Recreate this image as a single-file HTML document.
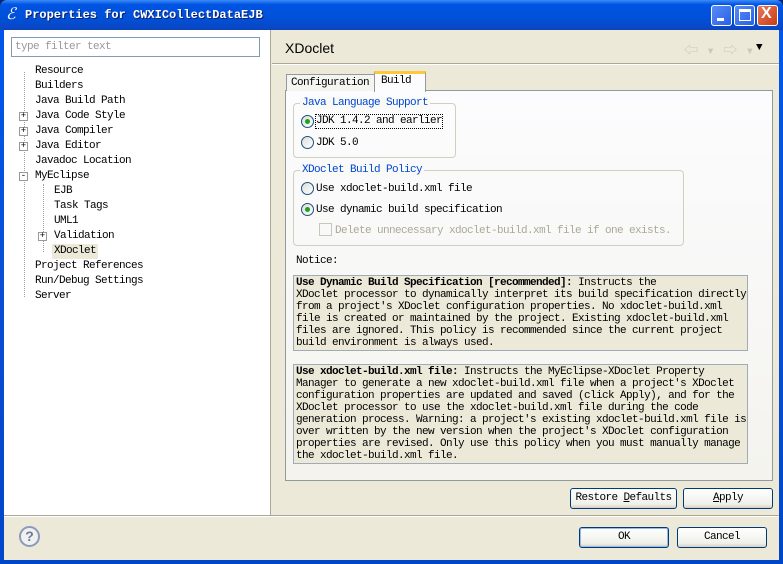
<!DOCTYPE html>
<html><head><style>
*{margin:0;padding:0;box-sizing:border-box}
body{width:783px;height:564px;overflow:hidden;background:#0a246a;font-family:"Liberation Mono","Noto Sans CJK SC",monospace;font-size:11px;letter-spacing:-0.6px;color:#000;position:relative}
.abs{position:absolute}
.win{left:0;top:0;width:783px;height:564px;background:linear-gradient(#0058ee,#0a4fd6 50%,#0046c8);border-radius:7px 7px 0 0}
.title{left:0;top:0;width:783px;height:30px;background:linear-gradient(#3c8cf8,#0054e3 15%,#0050d8 60%,#0848c8 90%,#0a44b8);border-radius:7px 7px 0 0}
.tt{left:25px;top:8px;color:#fff;font-weight:bold;font-size:12px;letter-spacing:0;text-shadow:1px 1px #0a1f6a}
.tb{top:5px;width:21px;height:21px;border:1px solid #fff;border-radius:3px;background:linear-gradient(135deg,#5a8cf6,#2660e6)}
.client{left:4px;top:30px;width:775px;height:530px;background:#ece9d8}
.left{left:4px;top:30px;width:267px;height:485px;background:#fff;border-right:1px solid #aca899}
.filter{left:11px;top:37px;width:249px;height:20px;border:1px solid #7f9db9;color:#999;padding:3px 3px;font-size:11px}
.ti{position:absolute;white-space:nowrap;line-height:13px}
.hd{left:285px;top:40px;font-family:"Liberation Sans",sans-serif;font-size:14px;letter-spacing:0}
.box{border:1px solid #919b9c;background:#fcfcfe}
.grp{border:1px solid #d0d0bf;border-radius:4px}
.gl{position:absolute;background:#f9f9f6;color:#0046d5;padding:0 2px;top:-7px;left:6px}
.rad{position:absolute;width:13px;height:13px;border:1px solid #1c5180;border-radius:50%;background:linear-gradient(135deg,#dcdcd7,#fff)}
.rad.on::after{content:"";position:absolute;left:3px;top:3px;width:5px;height:5px;border-radius:50%;background:#21a121}
.nt{position:absolute;left:293px;width:455px;border:1px solid #a0aab8;background:#ece9d8;line-height:12px;padding:1px 2px;white-space:pre}
.btn{position:absolute;height:21px;border:1px solid #003c74;border-radius:3px;background:linear-gradient(#fff,#f0f0ea 80%,#d6d0c5);text-align:center;line-height:19px}
.tree{position:absolute;left:0;top:2px;width:280px;height:300px}
</style></head><body>
<div class="abs win"></div>
<div class="abs title"></div>
<div class="abs" style="left:6px;top:7px;width:15px;height:16px;color:#fff;font-style:italic;font-size:16px;line-height:16px;font-family:'Liberation Serif',serif">ℰ</div>
<div class="abs tt">Properties for CWXICollectDataEJB</div>
<div class="abs tb" style="left:711px"><div class="abs" style="left:5px;top:12px;width:7px;height:3px;background:#fff"></div></div>
<div class="abs tb" style="left:734px"><div class="abs" style="left:4px;top:3px;width:12px;height:12px;border:1px solid #fff;border-top-width:3px"></div></div>
<div class="abs tb" style="left:757px;background:linear-gradient(135deg,#e8795a,#c83c16)"><div class="abs" style="left:3px;top:-1px;color:#fff;font:bold 16px 'Liberation Sans';letter-spacing:0">X</div></div>
<div class="abs client"></div>
<div class="abs left"></div>
<div class="abs filter">type filter text</div>
<div class="tree">
<div class="abs" style="left:24px;top:70px;height:225px;border-left:1px dotted #a0a0a0"></div>
<div class="abs" style="left:43px;top:182px;height:68px;border-left:1px dotted #a0a0a0"></div>
<div class="ti" style="left:35px;top:63px">Resource</div>
<div class="ti" style="left:35px;top:78px">Builders</div>
<div class="ti" style="left:35px;top:93px">Java Build Path</div>
<div class="ti" style="left:35px;top:108px">Java Code Style</div>
<div class="ti" style="left:35px;top:123px">Java Compiler</div>
<div class="ti" style="left:35px;top:138px">Java Editor</div>
<div class="ti" style="left:35px;top:153px">Javadoc Location</div>
<div class="ti" style="left:35px;top:168px">MyEclipse</div>
<div class="ti" style="left:54px;top:183px">EJB</div>
<div class="ti" style="left:54px;top:198px">Task Tags</div>
<div class="ti" style="left:54px;top:213px">UML1</div>
<div class="ti" style="left:54px;top:228px">Validation</div>
<div class="ti" style="left:52px;top:242px;background:#ece9d8;padding:1px 2px">XDoclet</div>
<div class="ti" style="left:35px;top:258px">Project References</div>
<div class="ti" style="left:35px;top:273px">Run/Debug Settings</div>
<div class="ti" style="left:35px;top:288px">Server</div>
<div class="ti" style="left:19px;top:110px;width:9px;height:9px;border:1px solid #999;background:#fff;font-size:9px;line-height:7px;text-align:center;letter-spacing:0">+</div>
<div class="ti" style="left:19px;top:125px;width:9px;height:9px;border:1px solid #999;background:#fff;font-size:9px;line-height:7px;text-align:center;letter-spacing:0">+</div>
<div class="ti" style="left:19px;top:140px;width:9px;height:9px;border:1px solid #999;background:#fff;font-size:9px;line-height:7px;text-align:center;letter-spacing:0">+</div>
<div class="ti" style="left:19px;top:170px;width:9px;height:9px;border:1px solid #999;background:#fff;font-size:9px;line-height:7px;text-align:center;letter-spacing:0">-</div>
<div class="ti" style="left:38px;top:230px;width:9px;height:9px;border:1px solid #999;background:#fff;font-size:9px;line-height:7px;text-align:center;letter-spacing:0">+</div>
</div>
<div class="abs hd">XDoclet</div>
<div class="abs" style="left:684px;top:40px;color:#c8c8c0;font-size:14px;letter-spacing:0">⇦ ▾ ⇨ ▾</div>
<div class="abs" style="left:756px;top:42px;font-size:11px;letter-spacing:0">▼</div>
<div class="abs" style="left:272px;top:63px;width:507px;height:1px;background:#aca899"></div>
<div class="abs" style="left:272px;top:64px;width:507px;height:1px;background:#fff"></div>
<div class="abs box" style="left:285px;top:90px;width:488px;height:391px;background:linear-gradient(#fcfcfe,#f4f3ee)"></div>
<div class="abs" style="left:286px;top:74px;width:89px;height:17px;border:1px solid #919b9c;border-bottom:none;background:#f4f4f0;padding:2px 4px">Configuration</div>
<div class="abs" style="left:374px;top:71px;width:52px;height:21px;border:1px solid #919b9c;border-top:3px solid #ffc83c;border-bottom:none;background:#fcfcfe;padding:1px 6px">Build</div>
<div class="abs grp" style="left:293px;top:103px;width:163px;height:55px"><span class="gl">Java Language Support</span></div>
<div class="rad on" style="left:301px;top:115px"></div>
<div class="ti" style="left:316px;top:115px;outline:1px dotted #000">JDK 1.4.2 and earlier</div>
<div class="rad" style="left:301px;top:136px"></div>
<div class="ti" style="left:316px;top:137px">JDK 5.0</div>
<div class="abs grp" style="left:293px;top:170px;width:391px;height:76px"><span class="gl">XDoclet Build Policy</span></div>
<div class="rad" style="left:301px;top:182px"></div>
<div class="ti" style="left:316px;top:183px">Use xdoclet-build.xml file</div>
<div class="rad on" style="left:301px;top:203px"></div>
<div class="ti" style="left:316px;top:204px">Use dynamic build specification</div>
<div class="abs" style="left:319px;top:223px;width:13px;height:13px;border:1px solid #c9c7ba"></div>
<div class="ti" style="left:335px;top:225px;color:#aca899">Delete unnecessary xdoclet-build.xml file if one exists.</div>
<div class="ti" style="left:296px;top:255px">Notice:</div>
<div class="nt" style="top:275px;height:76px"><b>Use Dynamic Build Specification [recommended]:</b> Instructs the
XDoclet processor to dynamically interpret its build specification directly
from a project's XDoclet configuration properties. No xdoclet-build.xml
file is created or maintained by the project. Existing xdoclet-build.xml
files are ignored. This policy is recommended since the current project
build environment is always used.</div>
<div class="nt" style="top:364px;height:100px"><b>Use xdoclet-build.xml file:</b> Instructs the MyEclipse-XDoclet Property
Manager to generate a new xdoclet-build.xml file when a project's XDoclet
configuration properties are updated and saved (click Apply), and for the
XDoclet processor to use the xdoclet-build.xml file during the code
generation process. Warning: a project's existing xdoclet-build.xml file is
over written by the new version when the project's XDoclet configuration
properties are revised. Only use this policy when you must manually manage
the xdoclet-build.xml file.</div>
<div class="btn" style="left:570px;top:488px;width:107px">Restore <u>D</u>efaults</div>
<div class="btn" style="left:683px;top:488px;width:90px"><u>A</u>pply</div>
<div class="abs" style="left:4px;top:515px;width:775px;height:1px;background:#aca899"></div>
<div class="abs" style="left:4px;top:516px;width:775px;height:1px;background:#fff"></div>
<div class="abs" style="left:19px;top:526px;width:21px;height:21px;border:2px solid #8a9ab8;border-radius:50%;background:#f0f0f0;color:#6a7a98;font:bold 14px/17px 'Liberation Sans';text-align:center;letter-spacing:0">?</div>
<div class="btn" style="left:579px;top:527px;width:90px;border-color:#003c74;box-shadow:inset 0 0 0 1px #98b8ea">OK</div>
<div class="btn" style="left:677px;top:527px;width:90px">Cancel</div>
</body></html>
